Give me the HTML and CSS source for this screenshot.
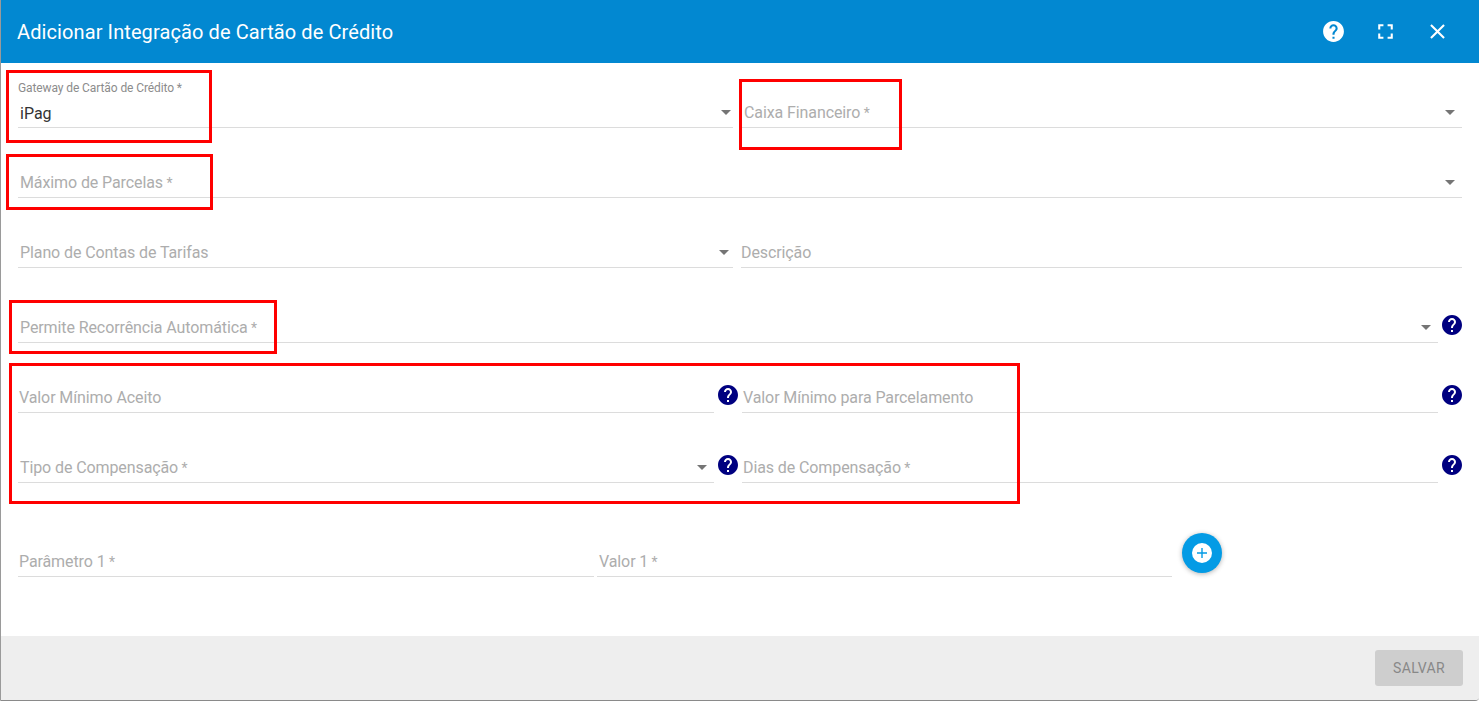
FILE: index.html
```html
<!DOCTYPE html>
<html lang="pt-BR">
<head>
<meta charset="utf-8">
<title>Adicionar Integração de Cartão de Crédito</title>
<link rel="stylesheet" href="styles.css">
</head>
<body>
<div class="dialog">
  <header class="header">
    <h1 class="title">Adicionar Integração de Cartão de Crédito</h1>
    <div class="actions">
      <button class="icon-btn"><svg viewBox="0 0 24 24" class="i25"><path d="M12 2C6.48 2 2 6.48 2 12s4.48 10 10 10 10-4.48 10-10S17.52 2 12 2zm1 17h-2v-2h2v2zm2.07-7.75l-.9.92C13.45 12.9 13 13.5 13 15h-2v-.5c0-1.1.45-2.1 1.17-2.83l1.24-1.26c.37-.36.59-.86.59-1.41 0-1.1-.9-2-2-2s-2 .9-2 2H8c0-2.21 1.79-4 4-4s4 1.79 4 4c0 .88-.36 1.68-.93 2.25z"/></svg></button>
      <button class="icon-btn"><svg viewBox="0 0 24 24" class="i25"><path d="M7 14H5v5h5v-2H7v-3zm-2-4h2V7h3V5H5v5zm12 7h-3v2h5v-5h-2v3zM14 5v2h3v3h2V5h-5z"/></svg></button>
      <button class="icon-btn"><svg viewBox="0 0 24 24" class="i25"><path d="M19 6.41L17.59 5 12 10.59 6.41 5 5 6.41 10.59 12 5 17.59 6.41 19 12 13.41 17.59 19 19 17.59 13.41 12z"/></svg></button>
    </div>
  </header>

  <main class="form">
    <div class="row row-first">
      <div class="field w715 filled">
        <div class="value-wrap">
          <span class="float-label">Gateway de Cartão de Crédito *</span>
          <span class="value">iPag</span>
        </div>
        <span class="arrow"></span>
      </div>
      <div class="field w721 pad3">
        <span class="ph">Caixa Financeiro <span class="req">*</span></span>
        <span class="arrow arrow-in"></span>
      </div>
    </div>

    <div class="row">
      <div class="field w1444">
        <span class="ph">Máximo de Parcelas <span class="req">*</span></span>
        <span class="arrow arrow-in"></span>
      </div>
    </div>

    <div class="row">
      <div class="field w715">
        <span class="ph">Plano de Contas de Tarifas</span>
        <span class="arrow arrow-narrow"></span>
      </div>
      <div class="field w721 pad0">
        <span class="ph">Descrição</span>
      </div>
    </div>

    <div class="row row-tall">
      <div class="field w1420">
        <span class="ph">Permite Recorrência Automática <span class="req">*</span></span>
        <span class="arrow arrow-in"></span>
      </div>
      <svg viewBox="0 0 24 24" class="help help-end"><path d="M12 2C6.48 2 2 6.48 2 12s4.48 10 10 10 10-4.48 10-10S17.52 2 12 2zm1 17h-2v-2h2v2zm2.07-7.75l-.9.92C13.45 12.9 13 13.5 13 15h-2v-.5c0-1.1.45-2.1 1.17-2.83l1.24-1.26c.37-.36.59-.86.59-1.41 0-1.1-.9-2-2-2s-2 .9-2 2H8c0-2.21 1.79-4 4-4s4 1.79 4 4c0 .88-.36 1.68-.93 2.25z"/></svg>
    </div>

    <div class="row">
      <div class="field w696 pad1">
        <span class="ph">Valor Mínimo Aceito</span>
      </div>
      <svg viewBox="0 0 24 24" class="help help-mid"><path d="M12 2C6.48 2 2 6.48 2 12s4.48 10 10 10 10-4.48 10-10S17.52 2 12 2zm1 17h-2v-2h2v2zm2.07-7.75l-.9.92C13.45 12.9 13 13.5 13 15h-2v-.5c0-1.1.45-2.1 1.17-2.83l1.24-1.26c.37-.36.59-.86.59-1.41 0-1.1-.9-2-2-2s-2 .9-2 2H8c0-2.21 1.79-4 4-4s4 1.79 4 4c0 .88-.36 1.68-.93 2.25z"/></svg>
      <div class="field w696 pad1">
        <span class="ph">Valor Mínimo para Parcelamento</span>
      </div>
      <svg viewBox="0 0 24 24" class="help help-end"><path d="M12 2C6.48 2 2 6.48 2 12s4.48 10 10 10 10-4.48 10-10S17.52 2 12 2zm1 17h-2v-2h2v2zm2.07-7.75l-.9.92C13.45 12.9 13 13.5 13 15h-2v-.5c0-1.1.45-2.1 1.17-2.83l1.24-1.26c.37-.36.59-.86.59-1.41 0-1.1-.9-2-2-2s-2 .9-2 2H8c0-2.21 1.79-4 4-4s4 1.79 4 4c0 .88-.36 1.68-.93 2.25z"/></svg>
    </div>

    <div class="row">
      <div class="field w696">
        <span class="ph">Tipo de Compensação <span class="req">*</span></span>
        <span class="arrow arrow-in"></span>
      </div>
      <svg viewBox="0 0 24 24" class="help help-mid"><path d="M12 2C6.48 2 2 6.48 2 12s4.48 10 10 10 10-4.48 10-10S17.52 2 12 2zm1 17h-2v-2h2v2zm2.07-7.75l-.9.92C13.45 12.9 13 13.5 13 15h-2v-.5c0-1.1.45-2.1 1.17-2.83l1.24-1.26c.37-.36.59-.86.59-1.41 0-1.1-.9-2-2-2s-2 .9-2 2H8c0-2.21 1.79-4 4-4s4 1.79 4 4c0 .88-.36 1.68-.93 2.25z"/></svg>
      <div class="field w696 pad1">
        <span class="ph">Dias de Compensação <span class="req">*</span></span>
      </div>
      <svg viewBox="0 0 24 24" class="help help-end"><path d="M12 2C6.48 2 2 6.48 2 12s4.48 10 10 10 10-4.48 10-10S17.52 2 12 2zm1 17h-2v-2h2v2zm2.07-7.75l-.9.92C13.45 12.9 13 13.5 13 15h-2v-.5c0-1.1.45-2.1 1.17-2.83l1.24-1.26c.37-.36.59-.86.59-1.41 0-1.1-.9-2-2-2s-2 .9-2 2H8c0-2.21 1.79-4 4-4s4 1.79 4 4c0 .88-.36 1.68-.93 2.25z"/></svg>
    </div>

    <div class="row row-params">
      <div class="field w576 pad1">
        <span class="ph">Parâmetro 1 <span class="req">*</span></span>
      </div>
      <div class="field w575 gap3 pad2">
        <span class="ph">Valor 1 <span class="req">*</span></span>
      </div>
      <button class="fab"><svg viewBox="0 0 24 24" class="fab-icon"><circle cx="12" cy="12" r="10" fill="#fff"/><path d="M12.7 7h-1.4v4.3H7v1.4h4.3V17h1.4v-4.3H17v-1.4h-4.3z" fill="#039be5"/></svg></button>
    </div>
  </main>

  <footer class="footer">
    <button class="save">SALVAR</button>
  </footer>

  <div class="mark m1"></div>
  <div class="mark m2"></div>
  <div class="mark m3"></div>
  <div class="mark m4"></div>
  <div class="mark m5"></div>
</div>
</body>
</html>
```
FILE: styles.css
```css
* { box-sizing: border-box; }
html, body { margin: 0; height: 100%; overflow: hidden; }
body { font-family: Roboto, "Liberation Sans", sans-serif; background: #fff; }
button { font-family: inherit; border: 0; padding: 0; background: none; }

.dialog {
  position: relative;
  width: 1479px;
  height: 701px;
  display: flex;
  flex-direction: column;
  border-left: 1px solid #9a9a9a;
  border-bottom: 1px solid #8a8a8a;
  border-bottom-right-radius: 4px;
  overflow: hidden;
}

.header {
  height: 63px;
  flex: none;
  background: #0288d1;
  color: #fff;
  display: flex;
  align-items: center;
  justify-content: space-between;
  padding: 0 18px 0 16px;
}
.title { margin: 0; font-size: 20px; font-weight: 400; letter-spacing: .1px; line-height: 1; }
.actions { display: flex; gap: 4px; }
.icon-btn { width: 48px; height: 48px; display: flex; align-items: center; justify-content: center; color: #fff; }
.i25 { width: 25px; height: 25px; fill: currentColor; display: block; }

.form { flex: 1; padding-left: 17px; }
.row { height: 70px; display: flex; align-items: flex-end; }
.row-first { height: 65px; }
.row-tall { height: 75px; }
.row-params { height: 94px; position: relative; }

.field {
  height: 40px;
  display: flex;
  align-items: center;
  justify-content: space-between;
  border-bottom: 1px solid #dcdcdc;
  padding: 12px 2px 1px 2px;
}
.filled { height: 56px; align-items: flex-start; padding-top: 9px; }
.w715 { width: 715px; margin-right: 8px; }
.w721 { width: 721px; }
.w1444 { width: 1444px; }
.w1420 { width: 1420px; }
.w696 { width: 696px; }
.w576 { width: 576px; }
.w575 { width: 575px; }
.gap3 { margin-left: 3px; }
.pad0 { padding-left: 0; }
.pad1 { padding-left: 1px; }
.pad2 { padding-left: 2px; }
.pad3 { padding-left: 3px; }

.ph { font-size: 16px; color: #adadad; line-height: 24px; white-space: nowrap; letter-spacing: -.1px; }
.req { margin-left: -.5px; font-size: 14px; }
.value-wrap { display: flex; flex-direction: column; }
.float-label { font-size: 12px; line-height: 14px; color: #8c8c8c; margin-left: -2px; letter-spacing: -.1px; }
.value { font-size: 16px; line-height: 24px; color: #333; margin-top: 7px; }

.arrow {
  width: 0;
  height: 0;
  margin-bottom: 1px;
  border-left: 5px solid transparent;
  border-right: 5px solid transparent;
  border-top: 5px solid #757575;
}
.arrow-in { margin-right: 5px; }
.arrow-narrow { margin-right: 2px; }
.filled .arrow { margin-top: 29px; }

.help { width: 24px; height: 24px; fill: #000080; flex: none; margin-bottom: 6px; }
.help-mid { margin-left: 2px; margin-right: 2px; }
.help-end { margin-left: 2px; }

.fab {
  width: 40px;
  height: 40px;
  margin-left: 10px;
  margin-bottom: 4px;
  border-radius: 50%;
  background: #039be5;
  box-shadow: 0 1px 5px rgba(0,0,0,.3);
  display: flex;
  align-items: center;
  justify-content: center;
}
.fab-icon { width: 24px; height: 24px; display: block; }

.footer {
  height: 64px;
  flex: none;
  background: #eeeeee;
  display: flex;
  align-items: flex-start;
  justify-content: flex-end;
  padding: 14px 16px 0 0;
}
.save {
  width: 88px;
  height: 36px;
  border-radius: 3px;
  background: #cecece;
  color: #888;
  font-size: 14px;
  font-weight: 400;
  letter-spacing: .3px;
}

.mark { position: absolute; border: 3px solid #f00; pointer-events: none; }
.m1 { left: 5px; top: 70px; width: 206px; height: 73px; }
.m2 { left: 5px; top: 154px; width: 207px; height: 56px; }
.m3 { left: 738px; top: 79px; width: 163px; height: 71px; }
.m4 { left: 8px; top: 300px; width: 268px; height: 54px; }
.m5 { left: 8px; top: 363px; width: 1011px; height: 141px; }
```
